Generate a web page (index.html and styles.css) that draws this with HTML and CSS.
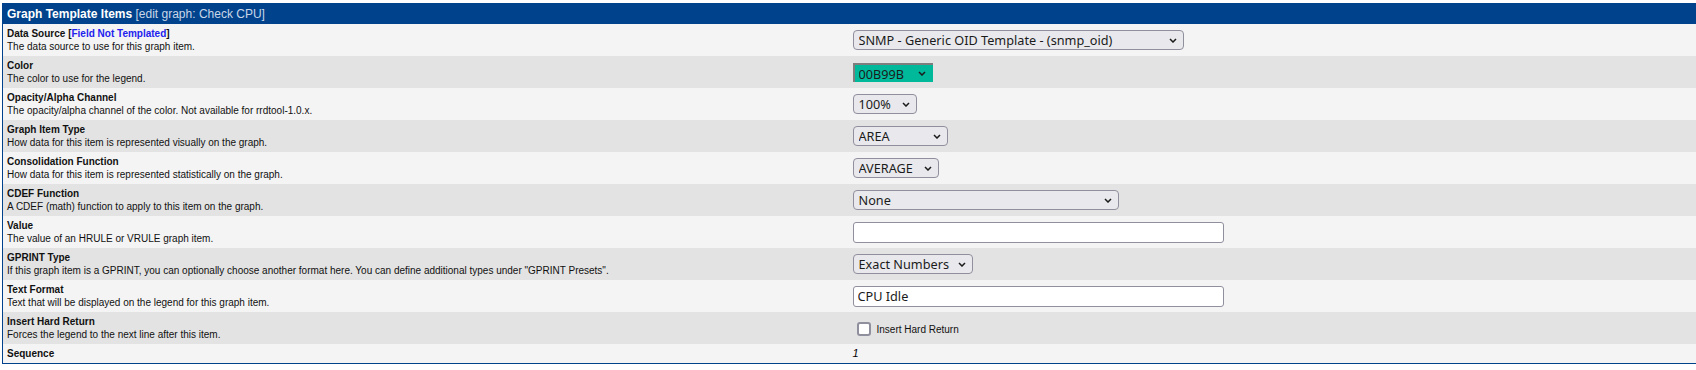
FILE: index.html
```html
<!DOCTYPE html>
<html lang="en">
<head>
    <meta charset="UTF-8">
    <title>Graph Template Items</title>
    <link rel="stylesheet" href="styles.css">
</head>
<body>

    <table class="cactiTable">
        <colgroup>
            <col class="fieldCol">
            <col>
        </colgroup>
        <tr class="tableHeader">
            <td colspan="2"><span class="title">Graph Template Items</span> <span class="subTitle">[edit graph: Check CPU]</span></td>
        </tr>

        <tr class="odd">
            <td class="field">
                <div class="label">Data Source [<span class="notTemplated">Field Not Templated</span>]</div>
                <div class="desc">The data source to use for this graph item.</div>
            </td>
            <td class="control">
                <span class="dropdown w-ds">
                    <select><option>SNMP - Generic OID Template - (snmp_oid)</option></select>
                    <svg viewBox="0 0 8 5"><path d="M1 1 L4 4 L7 1"/></svg>
                </span>
            </td>
        </tr>

        <tr class="even">
            <td class="field">
                <div class="label">Color</div>
                <div class="desc">The color to use for the legend.</div>
            </td>
            <td class="control">
                <span class="dropdown colorPick w-color">
                    <select><option>00B99B</option></select>
                    <svg viewBox="0 0 8 5"><path d="M1 1 L4 4 L7 1"/></svg>
                </span>
            </td>
        </tr>

        <tr class="odd">
            <td class="field">
                <div class="label">Opacity/Alpha Channel</div>
                <div class="desc">The opacity/alpha channel of the color. Not available for rrdtool-1.0.x.</div>
            </td>
            <td class="control">
                <span class="dropdown w-alpha">
                    <select><option>100%</option></select>
                    <svg viewBox="0 0 8 5"><path d="M1 1 L4 4 L7 1"/></svg>
                </span>
            </td>
        </tr>

        <tr class="even">
            <td class="field">
                <div class="label">Graph Item Type</div>
                <div class="desc">How data for this item is represented visually on the graph.</div>
            </td>
            <td class="control">
                <span class="dropdown w-type">
                    <select><option>AREA</option></select>
                    <svg viewBox="0 0 8 5"><path d="M1 1 L4 4 L7 1"/></svg>
                </span>
            </td>
        </tr>

        <tr class="odd">
            <td class="field">
                <div class="label">Consolidation Function</div>
                <div class="desc">How data for this item is represented statistically on the graph.</div>
            </td>
            <td class="control">
                <span class="dropdown w-cf">
                    <select><option>AVERAGE</option></select>
                    <svg viewBox="0 0 8 5"><path d="M1 1 L4 4 L7 1"/></svg>
                </span>
            </td>
        </tr>

        <tr class="even">
            <td class="field">
                <div class="label">CDEF Function</div>
                <div class="desc">A CDEF (math) function to apply to this item on the graph.</div>
            </td>
            <td class="control">
                <span class="dropdown w-cdef">
                    <select><option>None</option></select>
                    <svg viewBox="0 0 8 5"><path d="M1 1 L4 4 L7 1"/></svg>
                </span>
            </td>
        </tr>

        <tr class="odd">
            <td class="field">
                <div class="label">Value</div>
                <div class="desc">The value of an HRULE or VRULE graph item.</div>
            </td>
            <td class="control">
                <input type="text" class="textBox" value="">
            </td>
        </tr>

        <tr class="even">
            <td class="field">
                <div class="label">GPRINT Type</div>
                <div class="desc">If this graph item is a GPRINT, you can optionally choose another format here. You can define additional types under "GPRINT Presets".</div>
            </td>
            <td class="control">
                <span class="dropdown w-gprint">
                    <select><option>Exact Numbers</option></select>
                    <svg viewBox="0 0 8 5"><path d="M1 1 L4 4 L7 1"/></svg>
                </span>
            </td>
        </tr>

        <tr class="odd">
            <td class="field">
                <div class="label">Text Format</div>
                <div class="desc">Text that will be displayed on the legend for this graph item.</div>
            </td>
            <td class="control">
                <input type="text" class="textBox" value="CPU Idle">
            </td>
        </tr>

        <tr class="even">
            <td class="field">
                <div class="label">Insert Hard Return</div>
                <div class="desc">Forces the legend to the next line after this item.</div>
            </td>
            <td class="control">
                <label class="checkLine"><input type="checkbox" class="checkBox"> Insert Hard Return</label>
            </td>
        </tr>

        <tr class="odd">
            <td class="field">
                <div class="label">Sequence</div>
            </td>
            <td class="control">
                <em class="sequence">1</em>
            </td>
        </tr>
    </table>

</body>
</html>
```
FILE: styles.css
```css
/* General page */
body {
    margin: 3px 0 0 2px;
    font-family: "Liberation Sans", Arial, sans-serif;
    background-color: white;
    color: black;
    overflow: hidden;
}

/* Edit table */
.cactiTable {
    width: 1696px;
    border-collapse: collapse;
    border: 1px solid #00438C;
    table-layout: fixed;
}

.fieldCol {
    width: 846px;
}

.cactiTable td {
    padding: 3px 4px;
    vertical-align: middle;
}

.tableHeader td {
    background-color: #00438C;
    font-size: 12px;
    line-height: 14px;
}

.tableHeader .title {
    color: white;
    font-weight: bold;
}

.tableHeader .subTitle {
    color: #C9D6E8;
}

.odd {
    background-color: #F4F4F4;
}

.even {
    background-color: #E3E3E3;
}

.field {
    font-size: 10px;
    line-height: 13px;
    color: #111;
}

.label {
    font-weight: bold;
}

.notTemplated {
    color: #2222EE;
}

.control {
    font-size: 10px;
    line-height: 13px;
}

/* Dropdowns */
.dropdown {
    position: relative;
    display: inline-block;
    vertical-align: middle;
    height: 20px;
}

.dropdown select {
    appearance: none;
    -webkit-appearance: none;
    width: 100%;
    height: 20px;
    margin: 0;
    padding: 0 20px 0 5px;
    box-sizing: border-box;
    border: 1px solid #8F8F9D;
    border-radius: 4px;
    background-color: #E9E9ED;
    color: #1B1B1B;
    font-family: "Noto Sans", "Open Sans", sans-serif;
    font-size: 12.7px;
    line-height: 18px;
    outline: none;
}

.dropdown svg {
    position: absolute;
    right: 7px;
    top: 8px;
    width: 8px;
    height: 5px;
    fill: none;
    stroke: #1B1B1B;
    stroke-width: 1.5;
    pointer-events: none;
}

.colorPick select {
    background-color: #00B99B;
    border-radius: 0;
    border-width: 2px 0 0 2px;
    border-style: solid;
    border-color: #7E7E7E;
    padding-left: 4px;
}

.w-ds { width: 331px; }
.w-color { width: 80px; height: 19px; }
.w-color select { height: 19px; }
.w-alpha { width: 64px; }
.w-type { width: 95px; }
.w-cf { width: 86px; }
.w-cdef { width: 266px; }
.w-gprint { width: 120px; }

/* Text inputs */
.textBox {
    width: 371px;
    height: 21px;
    margin: 0;
    padding: 0 4px;
    box-sizing: border-box;
    border: 1px solid #8F8F9D;
    border-radius: 3px;
    background-color: white;
    color: #1B1B1B;
    font-family: "Noto Sans", "Open Sans", sans-serif;
    font-size: 12.7px;
    vertical-align: middle;
    outline: none;
}

/* Checkbox */
.checkLine {
    display: inline-flex;
    align-items: center;
    gap: 6px;
    margin: 2px 0 0 4px;
    vertical-align: middle;
    color: #111;
}

.checkBox {
    appearance: none;
    -webkit-appearance: none;
    width: 14px;
    height: 14px;
    margin: 0;
    box-sizing: border-box;
    border: 2px solid #8F8F9D;
    border-radius: 3px;
    background-color: white;
}

.sequence {
    font-size: 11px;
}
```
